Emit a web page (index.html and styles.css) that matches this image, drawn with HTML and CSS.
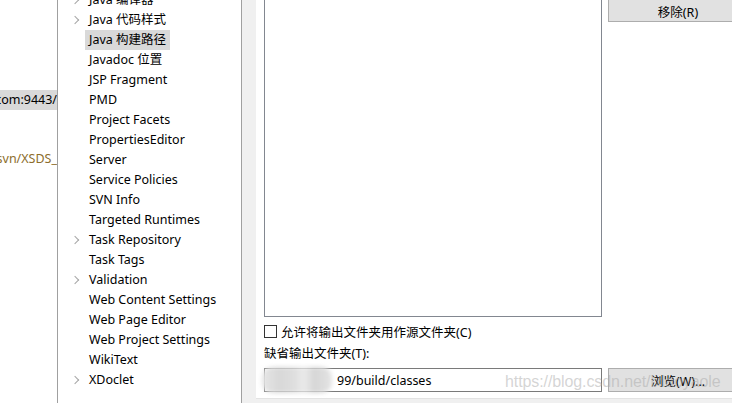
FILE: index.html
```html
<!DOCTYPE html>
<html lang="zh">
<head>
<meta charset="utf-8">
<link rel="stylesheet" href="styles.css">
</head>
<body>
<div class="window">
  <aside class="side">
    <div class="side-row sel"><span>https://svn.example.com:9443/</span></div>
    <div class="side-row link"><span>https://svn/XSDS_</span></div>
  </aside>
  <nav class="tree">
    <ul class="tree-list">
      <li class="node has-kids"><span class="chev"></span><span class="lbl">Java 编译器</span></li>
      <li class="node has-kids"><span class="chev"></span><span class="lbl">Java 代码样式</span></li>
      <li class="node selected"><span class="chev"></span><span class="lbl">Java 构建路径</span></li>
      <li class="node"><span class="chev"></span><span class="lbl">Javadoc 位置</span></li>
      <li class="node"><span class="chev"></span><span class="lbl">JSP Fragment</span></li>
      <li class="node"><span class="chev"></span><span class="lbl">PMD</span></li>
      <li class="node"><span class="chev"></span><span class="lbl">Project Facets</span></li>
      <li class="node"><span class="chev"></span><span class="lbl">PropertiesEditor</span></li>
      <li class="node"><span class="chev"></span><span class="lbl">Server</span></li>
      <li class="node"><span class="chev"></span><span class="lbl">Service Policies</span></li>
      <li class="node"><span class="chev"></span><span class="lbl">SVN Info</span></li>
      <li class="node"><span class="chev"></span><span class="lbl">Targeted Runtimes</span></li>
      <li class="node has-kids"><span class="chev"></span><span class="lbl">Task Repository</span></li>
      <li class="node"><span class="chev"></span><span class="lbl">Task Tags</span></li>
      <li class="node has-kids"><span class="chev"></span><span class="lbl">Validation</span></li>
      <li class="node"><span class="chev"></span><span class="lbl">Web Content Settings</span></li>
      <li class="node"><span class="chev"></span><span class="lbl">Web Page Editor</span></li>
      <li class="node"><span class="chev"></span><span class="lbl">Web Project Settings</span></li>
      <li class="node"><span class="chev"></span><span class="lbl">WikiText</span></li>
      <li class="node has-kids"><span class="chev"></span><span class="lbl">XDoclet</span></li>
    </ul>
  </nav>
  <div class="gutter"></div>
  <main class="page">
    <div class="top">
      <div class="listbox"></div>
      <div class="btn-col">
        <button class="btn">移除(R)</button>
      </div>
    </div>
    <label class="check-row"><span class="checkbox"></span><span>允许将输出文件夹用作源文件夹(C)</span></label>
    <div class="field-label">缺省输出文件夹(T):</div>
    <div class="out-row">
      <div class="textbox"><span class="blur"></span><span class="path">99/build/classes</span></div>
      <button class="btn">浏览(W)...</button>
    </div>
  </main>
</div>
<div class="watermark">https://blog.csdn.net/lxlaoyaole</div>
</body>
</html>
```
FILE: styles.css
```css
html, body {
  margin: 0;
  padding: 0;
  width: 732px;
  height: 403px;
  overflow: hidden;
  background: #f0f0f0;
}
body {
  position: relative;
  font-family: "Noto Sans", "Noto Sans CJK SC", sans-serif;
  font-size: 12.5px;
  color: #000;
}
.window {
  display: flex;
  height: 403px;
}
.side {
  width: 57px;
  flex: none;
  background: #fff;
  border-right: 1px solid #a0a0a0;
  padding-top: 90px;
  box-sizing: content-box;
  overflow: hidden;
}
.side-row {
  height: 20px;
  line-height: 20px;
  display: flex;
  justify-content: flex-end;
  white-space: nowrap;
  overflow: hidden;
}
.side-row.sel { background: #d9d9d9; }
.side-row.link { color: #8c6d2c; margin-top: 39px; }
.tree {
  width: 183px;
  flex: none;
  background: #fff;
  border-right: 1px solid #a0a0a0;
  overflow: hidden;
}
.tree-list {
  list-style: none;
  margin: -10px 0 0 0;
  padding: 0;
}
.node {
  height: 20px;
  display: flex;
  align-items: center;
}
.chev {
  width: 27px;
  flex: none;
  height: 20px;
  position: relative;
}
.has-kids .chev::before {
  content: "";
  position: absolute;
  left: 14px;
  top: 7px;
  width: 5px;
  height: 5px;
  border-right: 1.5px solid #a6a6a6;
  border-top: 1.5px solid #a6a6a6;
  transform: rotate(45deg);
}
.lbl {
  line-height: 20px;
  padding: 0 4px;
  white-space: nowrap;
}
.selected .lbl { background: #d9d9d9; }
.gutter {
  width: 14px;
  flex: none;
}
.page {
  flex: 1;
  height: 398px;
  background: #fff;
  border-bottom: 1px solid #e3e3e3;
  padding-left: 8px;
  overflow: hidden;
  display: flex;
  flex-direction: column;
}
.top {
  display: flex;
  gap: 6px;
  margin-top: -10px;
}
.listbox {
  width: 336px;
  height: 325px;
  border: 1px solid #828790;
  flex: none;
}
.btn-col {
  display: flex;
  flex-direction: column;
}
.btn {
  font: inherit;
  width: 140px;
  height: 32px;
  background: #e1e1e1;
  border: 1px solid #adadad;
  padding: 0;
  color: #000;
  flex: none;
}
.btn-col .btn { padding-top: 10px; }
.check-row {
  display: flex;
  align-items: center;
  gap: 4px;
  margin-top: 6px;
  height: 16px;
}
.checkbox {
  width: 11px;
  height: 11px;
  border: 1px solid #333;
  background: #fff;
}
.field-label {
  margin-top: 7px;
  height: 16px;
  line-height: 16px;
}
.out-row {
  display: flex;
  gap: 6px;
  margin-top: 6px;
}
.textbox {
  width: 336px;
  height: 22px;
  border: 1px solid #7a7a7a;
  display: flex;
  align-items: center;
  flex: none;
}
.blur {
  width: 70px;
  height: 26px;
  margin-left: -3px;
  margin-right: 5px;
  border-radius: 10px;
  background: linear-gradient(90deg, #e6e6e6 0%, #d8d8d8 25%, #dedede 45%, #eaeaea 60%, #d6d6d6 75%, #e4e4e4 100%);
  filter: blur(2px);
}
.out-row .btn {
  height: 24px;
}
.watermark {
  position: absolute;
  left: 505px;
  top: 373px;
  font-family: "Liberation Sans", Arial, sans-serif;
  font-size: 16px;
  color: rgba(170, 170, 170, 0.5);
  white-space: nowrap;
  letter-spacing: -0.1px;
}
```
